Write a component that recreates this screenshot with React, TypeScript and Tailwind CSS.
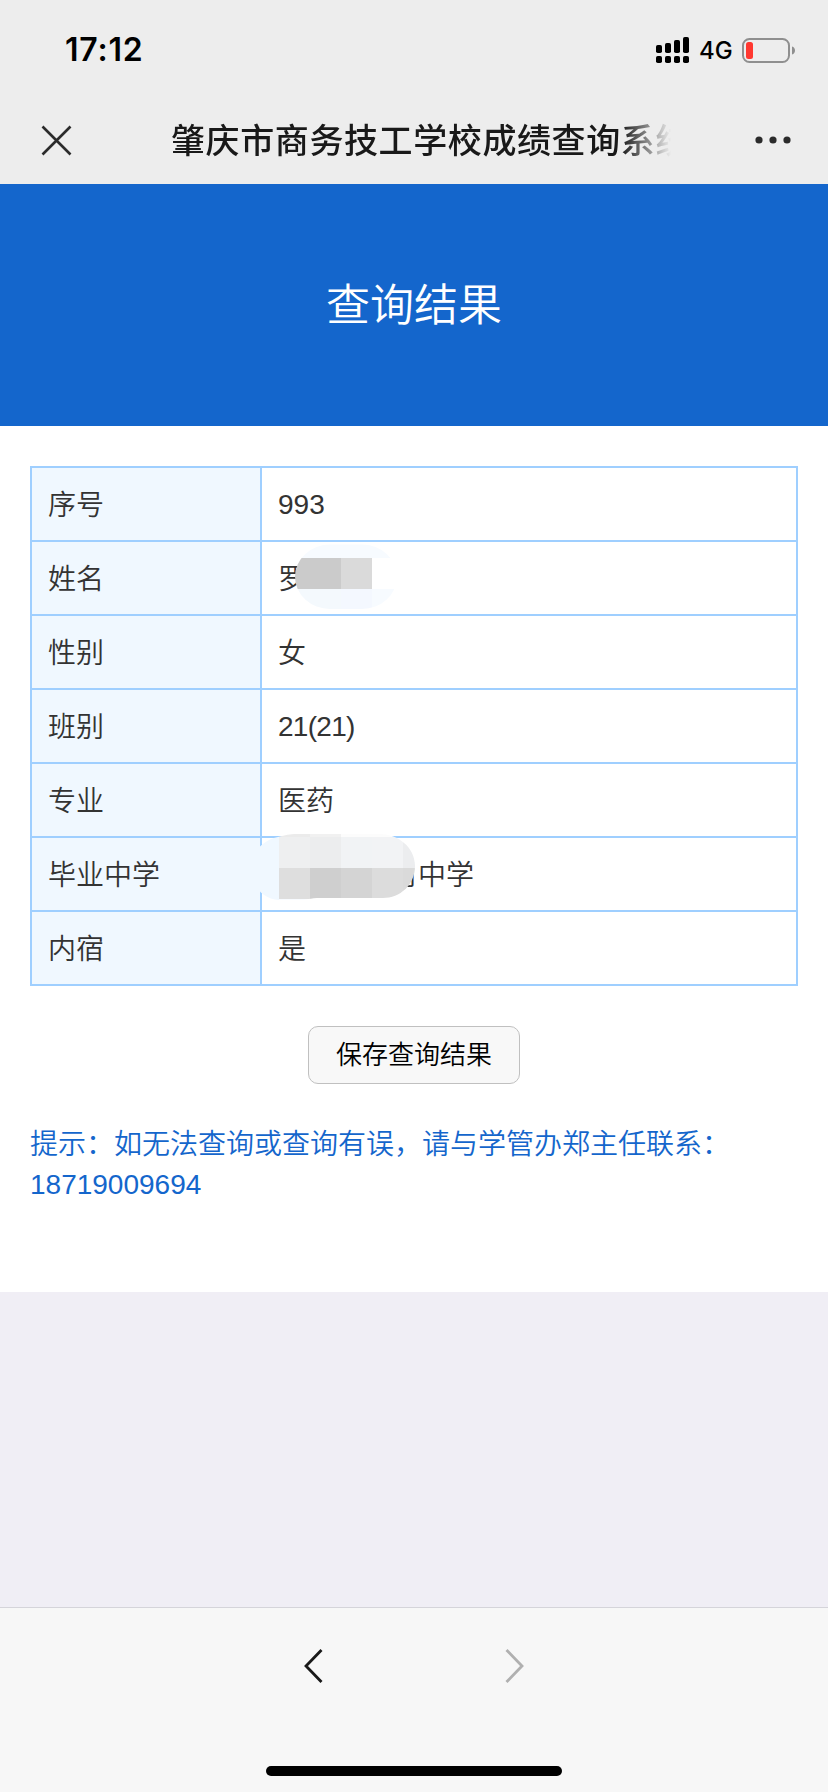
import type { ReactNode } from "react";

interface ResultRow {
  label: string;
  value: ReactNode;
}

function SignalIcon() {
  return (
    <svg width="34" height="27" viewBox="0 0 34 27">
      <rect x="0" y="8" width="6" height="8" rx="1.8" />
      <rect x="9" y="6" width="6" height="10" rx="1.8" />
      <rect x="18" y="3" width="6" height="13" rx="1.8" />
      <rect x="27" y="0" width="6" height="16" rx="1.8" />
      <rect x="0" y="19" width="6" height="7" rx="1.8" />
      <rect x="9" y="19" width="6" height="7" rx="1.8" />
      <rect x="18" y="19" width="6" height="7" rx="1.8" />
      <rect x="27" y="19" width="6" height="7" rx="1.8" />
    </svg>
  );
}

function BatteryIcon() {
  return (
    <svg width="54" height="25" viewBox="0 0 54 25">
      <rect x="1" y="1" width="46" height="23" rx="6.5" fill="none" stroke="#8f8f8f" strokeWidth="2" />
      <rect x="4" y="4" width="7" height="17" rx="2.5" fill="#ff3830" />
      <path d="M50 8.5c2 .6 3 2.1 3 4s-1 3.400-3 4z" fill="#8f8f8f" />
    </svg>
  );
}

function NameMosaic() {
  return (
    <svg className="absolute left-[33px] top-[2px]" width="104" height="66" viewBox="0 0 104 66">
      <clipPath id="name-shape">
        <rect x="0" y="0.500" width="102" height="64.500" rx="35" ry="32.250" />
      </clipPath>
      <g clipPath="url(#name-shape)" shapeRendering="crispEdges">
        <rect width="104" height="14" fill="#f7fbff" />
        <rect y="14" width="46" height="31" fill="#cbcbcb" />
        <rect x="46" y="14" width="31" height="31" fill="#dadada" />
        <rect x="77" y="14" width="27" height="31" fill="#ffffff" />
        <rect y="45" width="46" height="21" fill="#f4f9fd" />
        <rect x="46" y="45" width="31" height="21" fill="#f4f8ff" />
        <rect x="77" y="45" width="27" height="21" fill="#f7fbff" />
      </g>
    </svg>
  );
}

function SchoolMosaic() {
  return (
    <svg className="absolute left-[-10px] top-[-4px]" width="164" height="68" viewBox="0 0 164 68">
      <clipPath id="school-shape">
        <path d="M0 35C0 17 11 6 26 3C34 1 37 0 45 0H127C146 0 163 13 163 32C163 51 148 64 131 64H65C55 65 54 66 42 66H27C12 65 0 54 0 35Z" />
      </clipPath>
      <g clipPath="url(#school-shape)" shapeRendering="crispEdges">
        <rect width="27" height="68" fill="#f0f8ff" />
        <rect x="27" width="31" height="3" fill="#ebebeb" />
        <rect x="58" width="31" height="3" fill="#f1f1f1" />
        <rect x="89" width="75" height="3" fill="#fcfcfc" />
        <rect x="27" y="3" width="31" height="31" fill="#eeeff0" />
        <rect x="58" y="3" width="31" height="31" fill="#ecedee" />
        <rect x="89" y="3" width="31" height="31" fill="#f1f3f5" />
        <rect x="120" y="3" width="31" height="31" fill="#f2f3f5" />
        <rect x="151" y="3" width="13" height="31" fill="#ecedef" />
        <rect x="27" y="34" width="31" height="31" fill="#dedede" />
        <rect x="58" y="34" width="31" height="31" fill="#cfcfcf" />
        <rect x="89" y="34" width="31" height="31" fill="#d4d4d4" />
        <rect x="120" y="34" width="31" height="31" fill="#dcdcdc" />
        <rect x="151" y="34" width="13" height="31" fill="#dadada" />
        <rect x="27" y="65" width="40" height="2" fill="#f8fbff" />
      </g>
    </svg>
  );
}

const rows: ResultRow[] = [
  { label: "序号", value: "993" },
  {
    label: "姓名",
    value: (
      <>
        <span className="pt-[3px]">罗</span>
        <NameMosaic />
      </>
    ),
  },
  { label: "性别", value: <span className="pt-[3px]">女</span> },
  { label: "班别", value: <span className="tracking-[-0.7px]">21(21)</span> },
  { label: "专业", value: <span className="pt-[3px]">医药</span> },
  {
    label: "毕业中学",
    value: (
      <>
        <span className="pl-[110px] pt-[3px]">
          <span className="tracking-[2px]">门</span>中学
        </span>
        <SchoolMosaic />
      </>
    ),
  },
  { label: "内宿", value: <span className="pt-[3px]">是</span> },
];

function StatusBar() {
  return (
    <div className="flex h-[100px] items-center justify-between pl-[65px] pr-[32px]">
      <span className="font-[Inter,sans-serif] text-[32px] font-semibold leading-none tracking-[0.8px] text-black">
        17:12
      </span>
      <div className="flex items-center">
        <SignalIcon />
        <span className="ml-[9px] w-[43px] pt-[2px] font-[Inter,sans-serif] text-[24px] font-medium leading-none text-black">
          4G
        </span>
        <BatteryIcon />
      </div>
    </div>
  );
}

function NavBar() {
  return (
    <div className="flex h-[80px] items-center pl-[41px] pr-[35px]">
      <svg className="shrink-0" width="31" height="31" viewBox="0 0 31 31" stroke="#2b2b2b" strokeWidth="2.600">
        <path d="M1.500 1.500l28 28M29.500 1.500l-28 28" />
      </svg>
      <h1 className="ml-[99px] w-[500px] overflow-hidden whitespace-nowrap pt-[2px] text-[34px] font-medium leading-[50px] tracking-[0.6px] text-[#191919] [mask-image:linear-gradient(to_right,black_450px,transparent_500px)]">
        肇庆市商务技工学校成绩查询系统
      </h1>
      <svg className="ml-auto" width="38" height="8" viewBox="0 0 38 8" fill="#2b2b2b">
        <circle cx="4" cy="4" r="3.600" />
        <circle cx="18" cy="4" r="3.600" />
        <circle cx="32" cy="4" r="3.600" />
      </svg>
    </div>
  );
}

export default function App() {
  return (
    <div className="flex h-[1792px] w-[828px] flex-col overflow-hidden bg-[#f0eef5] font-['Liberation_Sans','Noto_Sans_CJK_SC',sans-serif]">
      <header className="h-[184px] bg-[#ededed]">
        <StatusBar />
        <NavBar />
      </header>

      <div className="flex h-[242px] items-center justify-center bg-[#1466cc] pt-[2px] text-[44px] font-[350] text-white">
        查询结果
      </div>

      <main className="h-[866px] bg-white px-[30px] pt-[40px]">
        <div className="border-x-2 border-t-2 border-[#9fcfff] text-[28px] font-[350] leading-[42px] text-[#333]">
          {rows.map((row) => (
            <div key={row.label} className="flex h-[74px]">
              <div className="flex w-[230px] items-center border-b-2 border-r-2 border-[#9fcfff] bg-[#f0f8ff] pl-4 pt-[3px]">
                {row.label}
              </div>
              <div className="relative flex flex-1 items-center border-b-2 border-[#9fcfff] pl-4 pt-px">
                {row.value}
              </div>
            </div>
          ))}
        </div>

        <button className="mx-auto mt-[40px] flex h-[58px] w-[212px] items-center justify-center rounded-[10px] border border-[#c0c0c0] bg-[#f8f8f8] pt-px text-[26px] font-[350] text-black">
          保存查询结果
        </button>

        <p className="mt-[41px] text-[28px] font-[350] leading-[40px] text-[#1466cc]">
          提示：如无法查询或查询有误，请与学管办郑主任联系：
          <br />
          18719009694
        </p>
      </main>

      <footer className="mt-auto flex h-[185px] flex-col items-center border-t border-[#d5d4da] bg-[#f7f7f7]">
        <div className="flex w-[220px] justify-between pt-[40px]">
          <svg width="20" height="36" viewBox="0 0 20 36" fill="none" stroke="#191919" strokeWidth="2.800">
            <path d="M17.500 2L2 18l15.500 16" />
          </svg>
          <svg width="20" height="36" viewBox="0 0 20 36" fill="none" stroke="#b0b0b0" strokeWidth="2.800">
            <path d="M2.500 2L18 18L2.500 34" />
          </svg>
        </div>
        <div className="mt-auto mb-4 h-[10px] w-[296px] rounded-full bg-black" />
      </footer>
    </div>
  );
}
